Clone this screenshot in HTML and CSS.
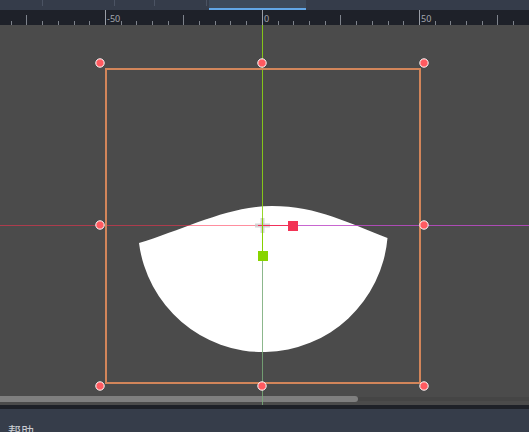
FILE: index.html
```html
<!DOCTYPE html>
<html lang="zh">
<head>
<meta charset="utf-8">
<title>Canvas</title>
<link rel="stylesheet" href="styles.css">
</head>
<body>
<div class="app">
  <div class="tabs">
    <div class="tab t1"></div>
    <div class="tab t2"></div>
    <div class="tab t3"></div>
    <div class="tab t4"></div>
    <div class="tab-gap"></div>
    <div class="tab active"></div>
    <div class="tab-rest"></div>
  </div>
  <div class="ruler">
    <svg class="ruler-svg" width="529" height="15" viewBox="0 0 529 15">
      <g class="tick-small">
        <line x1="11.5" y1="11" x2="11.5" y2="15"/>
        <line x1="42.5" y1="11" x2="42.5" y2="15"/>
        <line x1="58.5" y1="11" x2="58.5" y2="15"/>
        <line x1="74.5" y1="11" x2="74.5" y2="15"/>
        <line x1="89.5" y1="11" x2="89.5" y2="15"/>
        <line x1="121.5" y1="11" x2="121.5" y2="15"/>
        <line x1="136.5" y1="11" x2="136.5" y2="15"/>
        <line x1="152.5" y1="11" x2="152.5" y2="15"/>
        <line x1="168.5" y1="11" x2="168.5" y2="15"/>
        <line x1="199.5" y1="11" x2="199.5" y2="15"/>
        <line x1="215.5" y1="11" x2="215.5" y2="15"/>
        <line x1="230.5" y1="11" x2="230.5" y2="15"/>
        <line x1="246.5" y1="11" x2="246.5" y2="15"/>
        <line x1="278.5" y1="11" x2="278.5" y2="15"/>
        <line x1="293.5" y1="11" x2="293.5" y2="15"/>
        <line x1="309.5" y1="11" x2="309.5" y2="15"/>
        <line x1="325.5" y1="11" x2="325.5" y2="15"/>
        <line x1="356.5" y1="11" x2="356.5" y2="15"/>
        <line x1="372.5" y1="11" x2="372.5" y2="15"/>
        <line x1="388.5" y1="11" x2="388.5" y2="15"/>
        <line x1="403.5" y1="11" x2="403.5" y2="15"/>
        <line x1="435.5" y1="11" x2="435.5" y2="15"/>
        <line x1="450.5" y1="11" x2="450.5" y2="15"/>
        <line x1="466.5" y1="11" x2="466.5" y2="15"/>
        <line x1="482.5" y1="11" x2="482.5" y2="15"/>
        <line x1="513.5" y1="11" x2="513.5" y2="15"/>
      </g>
      <g class="tick-mid">
        <line x1="26.5" y1="5" x2="26.5" y2="15"/>
        <line x1="183.5" y1="5" x2="183.5" y2="15"/>
        <line x1="340.5" y1="5" x2="340.5" y2="15"/>
        <line x1="497.5" y1="5" x2="497.5" y2="15"/>
      </g>
      <g class="tick-major">
        <line x1="105.5" y1="0" x2="105.5" y2="15"/>
        <line x1="262.5" y1="0" x2="262.5" y2="15"/>
        <line x1="419.5" y1="0" x2="419.5" y2="15"/>
      </g>
      <g class="ruler-label">
        <text x="107" y="12">-50</text>
        <text x="264" y="12">0</text>
        <text x="421" y="12">50</text>
      </g>
    </svg>
  </div>
  <div class="viewport">
    <svg class="canvas" width="529" height="380" viewBox="0 25 529 380">
      <rect class="scroll-track" x="0" y="397" width="529" height="4"/>
      <rect class="scroll-grab" x="-4" y="396" width="362" height="6" rx="3"/>
      <path class="shape" d="M139,243 C185,229 228,206 272,206 C318,206 350,224 387.5,238 A125,125 0 0,1 139,243 Z"/>
      <line class="axis-x-neg" x1="0" y1="225.5" x2="262" y2="225.5"/>
      <line class="axis-x-pos" x1="298" y1="225.5" x2="529" y2="225.5"/>
      <line class="axis-y-neg" x1="262.5" y1="25" x2="262.5" y2="225"/>
      <line class="axis-y-pos" x1="262.5" y1="261" x2="262.5" y2="405"/>
      <rect class="bounds" x="106" y="69" width="314" height="314"/>
      <g class="handle">
        <circle cx="100" cy="63" r="4.2"/>
        <circle cx="262" cy="63" r="4.2"/>
        <circle cx="424" cy="63" r="4.2"/>
        <circle cx="100" cy="225" r="4.2"/>
        <circle cx="424" cy="225" r="4.2"/>
        <circle cx="100" cy="386" r="4.2"/>
        <circle cx="262" cy="386" r="4.2"/>
        <circle cx="424" cy="386" r="4.2"/>
      </g>
      <g class="pivot">
        <rect x="255" y="223.5" width="15" height="4"/>
        <rect x="260.5" y="218" width="4" height="15"/>
      </g>
      <line class="gizmo-x" x1="258" y1="225.5" x2="289" y2="225.5"/>
      <line class="gizmo-y" x1="262.5" y1="218" x2="262.5" y2="252"/>
      <rect class="sq-x" x="288" y="221" width="10" height="10"/>
      <rect class="sq-y" x="258" y="251" width="10" height="10"/>
    </svg>
  </div>
  <div class="divider"></div>
  <div class="panel"><span class="panel-title">帮助</span></div>
</div>
</body>
</html>
```
FILE: styles.css
```css
html, body {
  margin: 0;
  padding: 0;
  background: #363d4a;
}
.app {
  width: 529px;
  height: 432px;
  overflow: hidden;
  display: flex;
  flex-direction: column;
  font-family: "Noto Sans", "Noto Sans CJK SC", sans-serif;
}
.tabs {
  height: 10px;
  flex: none;
  display: flex;
  background: #353c4a;
}
.tab {
  position: relative;
  height: 10px;
  flex: none;
}
.tab::after {
  content: "";
  position: absolute;
  right: 0;
  top: 0;
  width: 1px;
  height: 6px;
  background: #4b5363;
}
.t1 { width: 43px; }
.t2 { width: 72px; }
.t3 { width: 40px; }
.t4 { width: 52px; }
.tab-gap { width: 2px; flex: none; }
.tab.active {
  width: 97px;
  height: 8px;
  background: #3d4a5b;
  border-bottom: 2px solid #62a6e6;
}
.tab.active::after { display: none; }
.tab-rest { flex: 1; }
.ruler {
  height: 15px;
  flex: none;
  background: #1e2129;
}
.ruler-svg { display: block; }
.tick-small line, .tick-mid line {
  stroke: #7e838c;
  stroke-width: 1;
}
.tick-major line {
  stroke: #9a9ea6;
  stroke-width: 1;
}
.ruler-label text {
  fill: #a3a7ae;
  font-family: "Noto Sans", "DejaVu Sans", sans-serif;
  font-size: 9px;
}
.viewport {
  height: 380px;
  flex: none;
  background: #4b4b4b;
}
.canvas { display: block; }
.scroll-track { fill: #454545; }
.scroll-grab { fill: #7f7f7f; }
.shape { fill: #ffffff; }
.axis-x-neg {
  stroke: rgba(255, 50, 80, 0.55);
  stroke-width: 1;
}
.axis-x-pos {
  stroke: rgba(190, 75, 200, 0.85);
  stroke-width: 1;
}
.axis-y-neg {
  stroke: rgba(140, 210, 20, 0.9);
  stroke-width: 1;
}
.axis-y-pos {
  stroke: rgba(120, 170, 120, 0.85);
  stroke-width: 1;
}
.bounds {
  fill: none;
  stroke: #d2855a;
  stroke-width: 2;
}
.handle circle {
  fill: #ff5a60;
  stroke: #ffffff;
  stroke-width: 1;
}
.pivot rect { fill: rgba(200, 200, 200, 0.75); }
.gizmo-x {
  stroke: #f0305a;
  stroke-width: 1;
}
.gizmo-y {
  stroke: #86d000;
  stroke-width: 1;
}
.sq-x { fill: #f23355; }
.sq-y { fill: #88d400; }
.divider {
  height: 4px;
  flex: none;
  background: #1e2128;
}
.panel {
  flex: 1;
  background: #363d4a;
  padding: 14px 8px 0;
  font-size: 13px;
  line-height: 16px;
  color: #c9ccd2;
}
.panel-title {
  font-family: "Noto Sans CJK SC", sans-serif;
}
```
